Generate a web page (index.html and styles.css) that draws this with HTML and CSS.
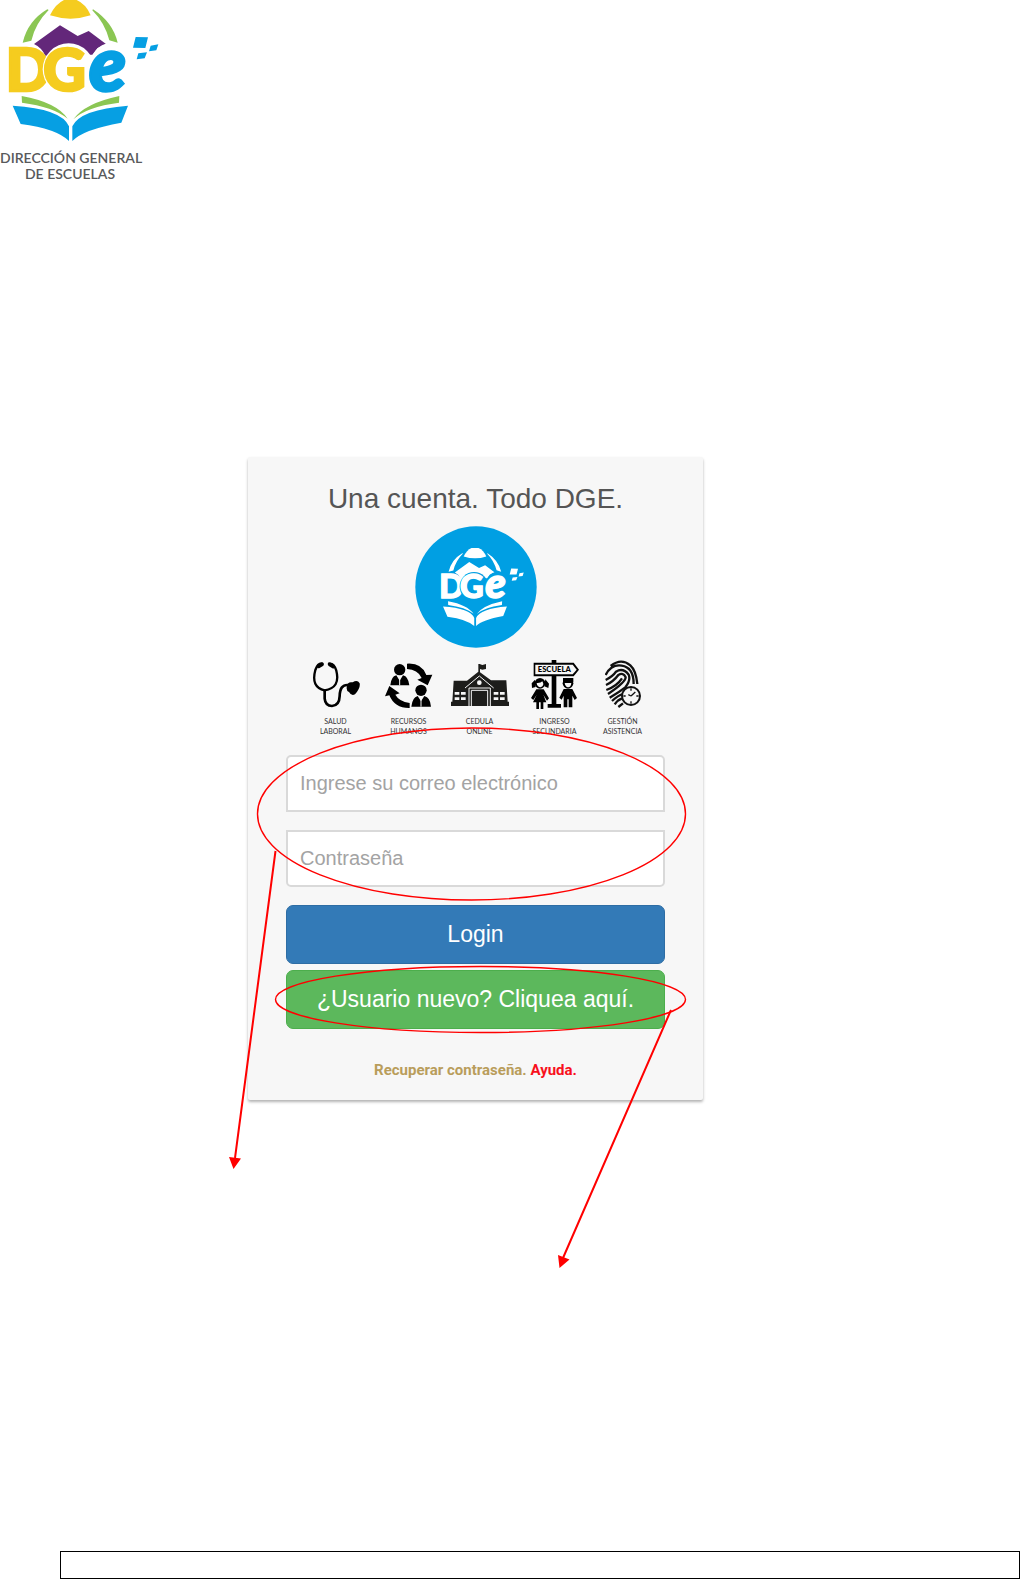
FILE: index.html
```html
<!DOCTYPE html>
<html lang="es">
<head>
<meta charset="utf-8">
<meta name="viewport" content="width=device-width, initial-scale=1">
<title>Una cuenta. Todo DGE.</title>
<link rel="stylesheet" href="styles.css">
</head>
<body>
<svg class="defs" aria-hidden="true">
  <symbol id="dge" viewBox="0 0 480 426">
    <path class="sun" d="M150 46Q166 12 192 0H230Q258 12 272 46Q212 66 150 46Z"/>
    <path class="leaf" d="M142 28Q84 62 68 128L94 122Q106 70 146 30ZM279 28Q338 66 353 128L328 121Q314 68 277 31Z"/>
    <path class="hill" d="M102 132L180 76L233 108L266 93L318 132L292 145L277 164L136 167Q124 142 102 132Z"/>
    <text class="letter yellow" x="17" y="273">D</text>
    <circle class="gap" cx="206" cy="208" r="78"/>
    <text class="letter yellow" x="130" y="273">G</text>
    <ellipse class="gap" cx="329" cy="206" rx="60" ry="76"/>
    <text class="letter blue e" x="267" y="272">e</text>
    <path class="blue" d="M407 111L444 112L436 144L399 143ZM452 137L475 133L469 151L447 154ZM415 160L441 157L434 175L410 178Z"/>
    <path class="leaf" d="M65 288Q170 307 203 356Q160 320 66 308ZM358 288Q254 310 220 358Q260 320 357 308Z"/>
    <path class="blue" d="M38 317Q185 326 207 379V423Q170 386 62 372ZM384 317Q240 328 217 379V423Q250 388 364 368Z"/>
  </symbol>
</svg>

<header class="brand">
  <svg class="brand-logo" role="img" aria-label="DGE"><use href="#dge"/></svg>
  <p class="brand-name">DIRECCIÓN GENERAL<br>DE ESCUELAS</p>
</header>

<main class="content">
  <section class="card">
    <h1 class="title">Una cuenta. Todo DGE.</h1>
    <svg class="badge" viewBox="0 0 366 366" role="img" aria-label="DGE">
      <circle class="badge-disc" cx="183" cy="183" r="182"/>
      <use href="#dge" x="63" y="66" width="266" height="236"/>
    </svg>

    <ul class="services">
      <li class="service">
        <svg class="service-icon" width="48" height="50" viewBox="0 0 144 150">
          <g fill="none" stroke="#000" stroke-linecap="round">
            <path stroke-width="7" d="M31 11Q18 8 10 30Q-4 82 38 91Q86 84 73 32Q66 8 51 11"/>
            <path stroke-width="11" d="M30 13L20 19M53 13L64 20"/>
            <path stroke-width="8" d="M38 92V116Q40 138 60 138Q82 137 83 108Q84 73 108 75"/>
          </g>
          <path d="M105 77Q107 64 122 67Q136 57 143 70Q146 84 129 103Q118 109 111 96Q101 93 105 77Z"/>
        </svg>
        <span class="service-name">SALUD<br>LABORAL</span>
      </li>
      <li class="service">
        <svg class="service-icon" width="48" height="50" viewBox="0 0 144 150">
          <circle cx="44" cy="29" r="17"/><circle cx="108" cy="91" r="17"/>
          <path d="M16 76Q18 50 34 46L44 62L54 46Q70 50 73 76ZM79 140Q82 112 98 108L108 124L118 108Q136 112 138 140ZM66 11Q110 8 124 45L142 44L128 76L97 59L110 54Q98 28 66 27ZM13 78L44 100L31 104Q42 124 74 129V144Q29 145 13 106L0 109Z"/>
          <path stroke="#f7f7f7" stroke-width="3" d="M44 56V76M108 118V140"/>
        </svg>
        <span class="service-name">RECURSOS<br>HUMANOS</span>
      </li>
      <li class="service">
        <svg class="service-icon" width="58" height="50" viewBox="0 0 174 150">
          <path fill="#1d1d1b" d="M0 138V125H4L8 62H48L82 35V12H86L94 15L105 12V27L94 29L87 27V37L120 61H166L170 125H174V138Z"/>
          <path fill="none" stroke="#f7f7f7" stroke-width="3" d="M42 84L85 48L128 84M54 138V84H118V138M61 138V91H110V138"/>
          <circle cx="85" cy="68" r="7" fill="#f7f7f7"/>
          <path fill="#f7f7f7" d="M11 96H25V104H11ZM30 96H44V104H30ZM11 112H25V120H11ZM30 112H44V120H30ZM128 96H142V104H128ZM147 96H161V104H147ZM128 112H142V120H128ZM147 112H161V120H147Z"/>
        </svg>
        <span class="service-name">CEDULA<br>ONLINE</span>
      </li>
      <li class="service">
        <svg class="service-icon" width="48" height="50" viewBox="0 0 144 150">
          <path d="M62 0H76V8H128L144 29L128 49H76V132H90V143H50V132H62V49H8V8H62Z"/>
          <path fill="#f7f7f7" d="M13 14H125L137 29L125 43H13Z"/>
          <text class="sign" x="70" y="36">ESCUELA</text>
          <circle cx="27" cy="70" r="16"/><circle cx="111" cy="70" r="16"/>
          <path d="M2 70L12 59L14 81L3 84ZM43 58L54 71L52 84L40 79ZM16 88H38L54 115L48 122L37 104L46 127H37V147H29V127H24V147H16V127H6L17 104L7 120L0 114ZM98 87H124L138 114L131 120L124 107V142H113V118H109V142H98V107L92 119L85 113ZM96 54H127V66H96Z"/>
          <path fill="#f7f7f7" d="M17 69Q29 70 34 64Q42 76 29 82Q18 81 17 69ZM101 69H121Q119 83 111 82Q103 81 101 69Z"/>
        </svg>
        <span class="service-name">INGRESO<br>SECUNDARIA</span>
      </li>
      <li class="service">
        <svg class="service-icon" width="36" height="50" viewBox="0 0 108 150">
          <g fill="none" stroke="#111" stroke-width="7">
            <path d="M17 18Q48-7 76 16Q93 31 97 72M2 45Q19 12 50 17Q86 22 86 72M2 60Q24 49 33 35Q54 22 71 44Q78 61 61 82M3 75Q25 65 40 45Q55 36 62 52Q62 67 9 102M4 90Q36 78 51 55M14 113Q43 96 65 79M21 123Q40 106 53 102M29 133Q39 119 51 115M40 141L54 130"/>
          </g>
          <circle cx="78" cy="108" r="27" fill="#f7f7f7" stroke="#111" stroke-width="6"/>
          <path fill="none" stroke="#111" stroke-width="4" d="M78 108L91 96M78 108L70 104M78 85V92M78 124V131M55 108H62M94 108H101"/>
        </svg>
        <span class="service-name">GESTIÓN<br>ASISTENCIA</span>
      </li>
    </ul>

    <form class="login">
      <input class="field field-top" type="email" aria-label="Correo electrónico" placeholder="Ingrese su correo electrónico">
      <input class="field field-bottom" type="password" aria-label="Contraseña" placeholder="Contraseña">
      <button class="button button-login" type="submit">Login</button>
      <button class="button button-new" type="button">¿Usuario nuevo? Cliquea aquí.</button>
    </form>
    <p class="help"><a class="recover" href="#recuperar">Recuperar contraseña.</a> <a class="ayuda" href="#ayuda">Ayuda.</a></p>

    <svg class="marks" width="456" height="820" viewBox="248 457 456 820" aria-hidden="true">
      <g fill="none" stroke="#f00">
        <ellipse stroke-width="1.4" cx="471.5" cy="814" rx="214" ry="86"/>
        <ellipse stroke-width="1.4" cx="480.5" cy="999.5" rx="205" ry="33"/>
        <path stroke-width="2" d="M275.5 851L235 1158M671 1010L563 1258"/>
      </g>
      <path fill="#f00" d="M229 1157L241 1158.5L233.5 1169ZM558 1255L569.5 1259.5L559.5 1268Z"/>
    </svg>
  </section>
</main>

<footer class="footer"></footer>
</body>
</html>
```
FILE: styles.css
```css
* { box-sizing: border-box; }

body {
  margin: 0;
  min-height: 100vh;
  display: flex;
  flex-direction: column;
  background: #fff;
  font-family: "Liberation Sans", Arial, sans-serif;
}

.defs { position: absolute; width: 0; height: 0; }

/* Emblem: colours come from the place where it is used */
.sun { fill: var(--yellow); }
.leaf { fill: var(--green); }
.hill { fill: var(--purple); }
.blue { fill: var(--blue); }
.yellow { fill: var(--yellow); }
.gap { fill: var(--gap); }
.letter {
  font: 900 176px Lato, sans-serif;
  stroke-width: 8px;
}
.letter.yellow { stroke: var(--yellow); }
.letter.blue { stroke: var(--blue); }
.letter.e { font-size: 228px; font-style: italic; }

.brand {
  --yellow: #f5cc1f;
  --green: #8bc653;
  --purple: #63277a;
  --blue: #069fe3;
  --gap: #fff;
}
.brand-logo { display: block; width: 160px; height: 142px; }
.brand-name {
  width: 140px;
  margin: 8px 0 0;
  color: #58595b;
  font: 600 14px/16px Lato, sans-serif;
  text-align: center;
  white-space: nowrap;
}

.content { padding: 275px 16px 48px 248px; }

.card {
  position: relative;
  max-width: 455px;
  padding: 26px 38px 20px;
  background: #f7f7f7;
  border-radius: 2px;
  box-shadow: 0 2px 3px rgba(0, 0, 0, 0.3);
}

.title {
  margin: 0;
  color: #555;
  font-size: 28px;
  font-weight: 400;
  line-height: 32px;
  text-align: center;
}

.badge {
  --yellow: #fff;
  --green: #fff;
  --purple: #fff;
  --blue: #fff;
  --gap: #009fe3;
  display: block;
  width: 122px;
  height: 122px;
  margin: 11px auto 12px;
}
.badge-disc { fill: #009fe3; }

.services {
  display: grid;
  grid-template-columns: 72px 74px 68px 82px 54px;
  justify-content: center;
  margin: 0;
  padding: 0 2px 0 0;
  list-style: none;
}
.service { display: flex; flex-direction: column; align-items: center; gap: 6px; }
.service-icon { display: block; }
.service-name {
  color: #333;
  font: 400 7px/10px Lato, sans-serif;
  text-align: center;
}
.sign { font: 900 23px Lato, sans-serif; text-anchor: middle; }

.login { display: flex; flex-direction: column; margin-top: 19px; }

.field {
  width: 100%;
  height: 57px;
  margin: 0 0 18px;
  padding: 0 12px;
  border: 2px solid #d9d9d9;
  background: #fff;
  font: 20px "Liberation Sans", Arial, sans-serif;
}
.field::placeholder { color: #a3a3a3; opacity: 1; }
.field-top { border-radius: 5px 5px 0 0; }
.field-bottom { border-radius: 0 0 5px 5px; }

.button {
  height: 59px;
  border-radius: 7px;
  color: #fff;
  font: 23px "Liberation Sans", Arial, sans-serif;
}
.button-login { border: 1px solid #2e6da4; background: #337ab7; }
.button-new { margin-top: 6px; border: 1px solid #4cae4c; background: #5cb85c; }

.help {
  margin: 31px 0 0;
  font: 700 15px/20px Roboto, sans-serif;
  text-align: center;
}
.help a { text-decoration: none; }
.recover { color: #b99d5b; }
.help .ayuda { color: #f8101c; }

/* Callouts over the card */
.marks {
  position: absolute;
  top: 0;
  left: 0;
  overflow: visible;
  pointer-events: none;
}

.footer {
  height: 28px;
  margin: auto 0 0 60px;
  border: 1px solid #000;
}
```
